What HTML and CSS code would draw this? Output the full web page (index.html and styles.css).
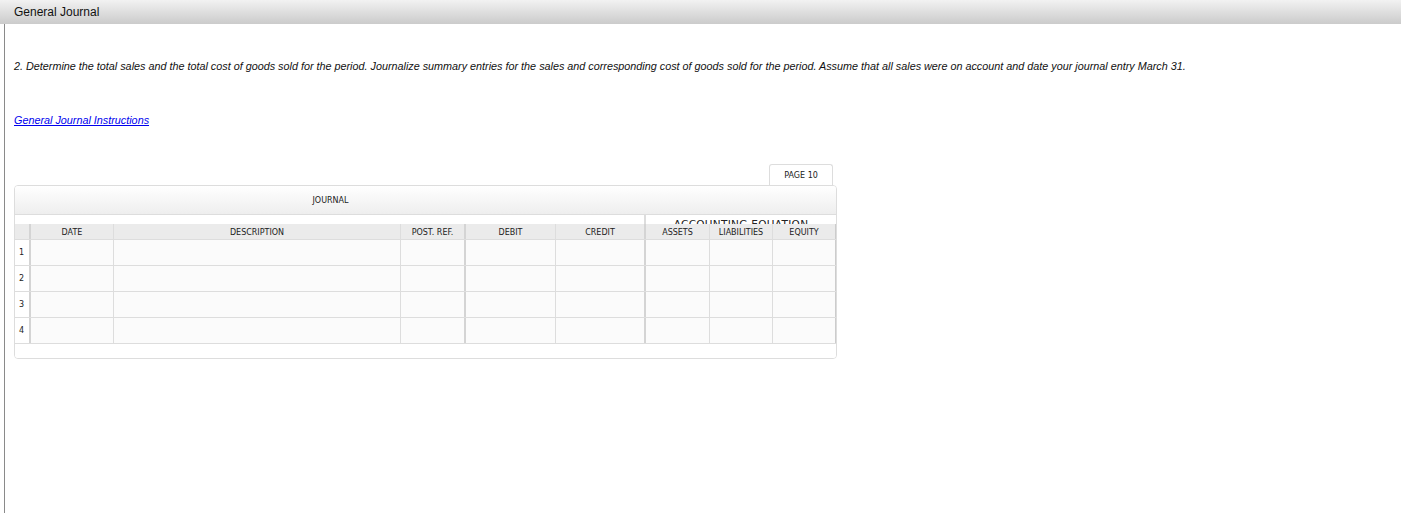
FILE: index.html
```html
<!DOCTYPE html>
<html lang="en">
<head>
    <meta charset="UTF-8">
    <title>General Journal</title>
    <link rel="stylesheet" href="styles.css">
</head>
<body>
    <div class="topbar">General Journal</div>
    <div class="content">
        <p class="question">2. Determine the total sales and the total cost of goods sold for the period. Journalize summary entries for the sales and corresponding cost of goods sold for the period. Assume that all sales were on account and date your journal entry March 31.</p>
        <a class="help-link" href="#">General Journal Instructions</a>

        <div class="journal-wrap">
            <div class="page-tab-row">
                <div class="page-tab">PAGE 10</div>
            </div>
            <div class="journal">
                <div class="journal-title">JOURNAL</div>
                <div class="eq-strip">
                    <div class="eq-spacer"></div>
                    <div class="eq-title">ACCOUNTING EQUATION</div>
                </div>
                <div class="jrow head">
                    <div class="cell c-num thick"></div>
                    <div class="cell c-date">DATE</div>
                    <div class="cell c-desc">DESCRIPTION</div>
                    <div class="cell c-post thick">POST. REF.</div>
                    <div class="cell c-debit">DEBIT</div>
                    <div class="cell c-credit thick">CREDIT</div>
                    <div class="cell c-assets">ASSETS</div>
                    <div class="cell c-liab">LIABILITIES</div>
                    <div class="cell c-equity">EQUITY</div>
                </div>
                <div class="jrow line">
                    <div class="cell c-num thick">1</div>
                    <div class="cell c-date"></div>
                    <div class="cell c-desc"></div>
                    <div class="cell c-post thick"></div>
                    <div class="cell c-debit"></div>
                    <div class="cell c-credit thick"></div>
                    <div class="cell c-assets"></div>
                    <div class="cell c-liab"></div>
                    <div class="cell c-equity"></div>
                </div>
                <div class="jrow line">
                    <div class="cell c-num thick">2</div>
                    <div class="cell c-date"></div>
                    <div class="cell c-desc"></div>
                    <div class="cell c-post thick"></div>
                    <div class="cell c-debit"></div>
                    <div class="cell c-credit thick"></div>
                    <div class="cell c-assets"></div>
                    <div class="cell c-liab"></div>
                    <div class="cell c-equity"></div>
                </div>
                <div class="jrow line">
                    <div class="cell c-num thick">3</div>
                    <div class="cell c-date"></div>
                    <div class="cell c-desc"></div>
                    <div class="cell c-post thick"></div>
                    <div class="cell c-debit"></div>
                    <div class="cell c-credit thick"></div>
                    <div class="cell c-assets"></div>
                    <div class="cell c-liab"></div>
                    <div class="cell c-equity"></div>
                </div>
                <div class="jrow line">
                    <div class="cell c-num thick">4</div>
                    <div class="cell c-date"></div>
                    <div class="cell c-desc"></div>
                    <div class="cell c-post thick"></div>
                    <div class="cell c-debit"></div>
                    <div class="cell c-credit thick"></div>
                    <div class="cell c-assets"></div>
                    <div class="cell c-liab"></div>
                    <div class="cell c-equity"></div>
                </div>
                <div class="journal-foot"></div>
            </div>
        </div>
    </div>
</body>
</html>
```

FILE: styles.css
```css
* {
    margin: 0;
    padding: 0;
    box-sizing: content-box;
}

html, body {
    height: 100%;
}

body {
    font-family: "Liberation Sans", Arial, sans-serif;
    background-color: #fff;
    overflow: hidden;
}

.topbar {
    height: 24px;
    line-height: 25px;
    padding-left: 14px;
    font-size: 12px;
    color: #111;
    background: linear-gradient(#f2f2f2, #cbcbcb);
}

.content {
    margin-left: 4px;
    border-left: 1px solid #8a8a8a;
    height: calc(100% - 24px);
    padding-left: 9px;
}

.question {
    padding-top: 36px;
    font-size: 10.8px;
    line-height: 13px;
    font-style: italic;
    color: #111;
}

.help-link {
    display: inline-block;
    margin-top: 41px;
    font-size: 10.8px;
    line-height: 13px;
    font-style: italic;
    color: #0000ee;
}

/* journal */

.journal-wrap {
    width: 823px;
    margin-top: 36px;
    font-family: "DejaVu Sans", Tahoma, sans-serif;
    font-size: 8px;
    color: #222;
}

.page-tab-row {
    display: flex;
    justify-content: flex-end;
    padding-right: 4px;
}

.page-tab {
    width: 62px;
    height: 20px;
    line-height: 21px;
    text-align: center;
    border: 1px solid #ddd;
    border-bottom: none;
    border-radius: 3px 3px 0 0;
    background-color: #fff;
}

.journal {
    border: 1px solid #ddd;
    border-radius: 4px;
    overflow: hidden;
}

.journal-title {
    height: 28px;
    line-height: 30px;
    padding-right: 190px;
    text-align: center;
    background: linear-gradient(#fff, #eeeeee);
    border-bottom: 1px solid #ddd;
}

.eq-strip {
    display: flex;
    height: 9px;
    background-color: #fff;
}

.eq-spacer {
    width: 629px;
    border-right: 2px solid #ddd;
}

.eq-title {
    flex: 1;
    height: 9px;
    overflow: hidden;
    text-align: center;
    font-size: 10.5px;
    line-height: 18px;
    letter-spacing: 0.3px;
}

.jrow {
    display: flex;
}

.cell {
    border-right: 1px solid #ddd;
    text-align: center;
}

.cell.thick {
    border-right: 2px solid #d4d4d4;
}

.head {
    height: 15px;
    line-height: 17px;
    background-color: #ebebeb;
    border-bottom: 1px solid #ddd;
}

.line {
    height: 25px;
    line-height: 25px;
    background-color: #fbfbfb;
    border-bottom: 1px solid #ddd;
}

.line .c-num {
    text-align: left;
    padding-left: 4px;
    width: 10px;
    background-color: #fff;
}

.c-num { width: 14px; }
.c-date { width: 82px; }
.c-desc { width: 286px; }
.c-post { width: 63px; }
.c-debit { width: 89px; }
.c-credit { width: 88px; }
.c-assets { width: 63px; }
.c-liab { width: 62px; }
.c-equity { width: 62px; border-right-color: #ccc; }

.journal-foot {
    height: 14px;
    background-color: #fff;
}
```
